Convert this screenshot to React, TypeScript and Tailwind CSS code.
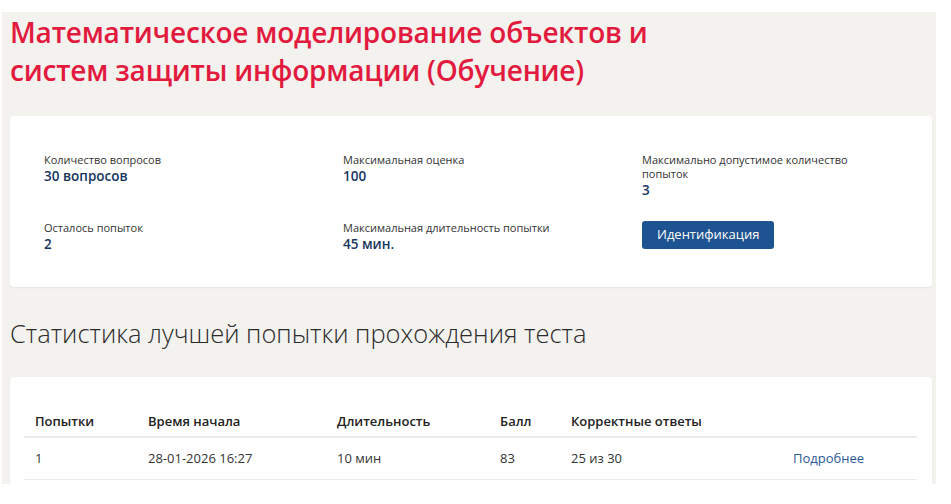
import React from "react";

function Info({ label, value }: { label: string; value: string }) {
  return (
    <div className="flex flex-col">
      <div className="text-[11px] leading-[14px] text-[#333333]">{label}</div>
      <div className="text-[13.5px] leading-[17px] font-semibold text-[#17365f] mt-[1px]">{value}</div>
    </div>
  );
}

export default function App() {
  return (
    <div className="w-[951px] h-[504px] bg-white overflow-hidden" style={{ fontFamily: '"Open Sans", "Noto Sans", sans-serif' }}>
      <div className="ml-[2px] mt-[12px] w-[934px] h-[472px] bg-[#f3f2ef] pl-[8px] pr-[4px] overflow-hidden">
        <h1 className="text-[28px] leading-[38px] font-semibold text-[#e21a3e] pt-[1px] tracking-[-0.2px]">
          Математическое моделирование объектов и
          <br />
          систем защиты информации (Обучение)
        </h1>
        <div className="mt-[27px] bg-white rounded-[4px] shadow-[0_1px_2px_rgba(0,0,0,0.06)] h-[171px] pl-[34px] pt-[37px]">
          <div className="grid grid-cols-[299px_299px_1fr] gap-y-[22px]">
            <Info label="Количество вопросов" value="30 вопросов" />
            <Info label="Максимальная оценка" value="100" />
            <div className="flex flex-col">
              <div className="text-[11px] leading-[14px] text-[#333333] w-[230px]">Максимально допустимое количество попыток</div>
              <div className="text-[13.5px] leading-[17px] font-semibold text-[#17365f] mt-[1px]">3</div>
            </div>
            <Info label="Осталось попыток" value="2" />
            <Info label="Максимальная длительность попытки" value="45 мин." />
            <div>
              <button className="h-[28px] px-[15px] rounded-[3px] bg-[#1d5390] text-white text-[13px] font-medium">
                Идентификация
              </button>
            </div>
          </div>
        </div>
        <h2 className="mt-[30px] text-[25.5px] leading-[32px] font-light text-[#2b2b2b]">
          Статистика лучшей попытки прохождения теста
        </h2>
        <div className="mt-[28px] bg-white rounded-[4px] shadow-[0_1px_2px_rgba(0,0,0,0.06)] h-[140px] pl-[14px] pr-[15px] pt-[30px]">
          <table className="w-full text-[13px] text-[#333333] border-collapse">
            <thead>
              <tr className="border-b-2 border-[#ebebeb]">
                <th className="text-left font-semibold text-[#222] pl-[11px] h-[30px] w-[124px]">Попытки</th>
                <th className="text-left font-semibold text-[#222] w-[189px]">Время начала</th>
                <th className="text-left font-semibold text-[#222] w-[163px]">Длительность</th>
                <th className="text-left font-semibold text-[#222] w-[71px]">Балл</th>
                <th className="text-left font-semibold text-[#222] w-[222px]">Корректные ответы</th>
                <th></th>
              </tr>
            </thead>
            <tbody>
              <tr className="border-b border-[#ebebeb]">
                <td className="pl-[11px] h-[42px]">1</td>
                <td>28-01-2026 16:27</td>
                <td>10 мин</td>
                <td>83</td>
                <td>25 из 30</td>
                <td className="text-[#2a5a98]">Подробнее</td>
              </tr>
            </tbody>
          </table>
        </div>
      </div>
    </div>
  );
}
